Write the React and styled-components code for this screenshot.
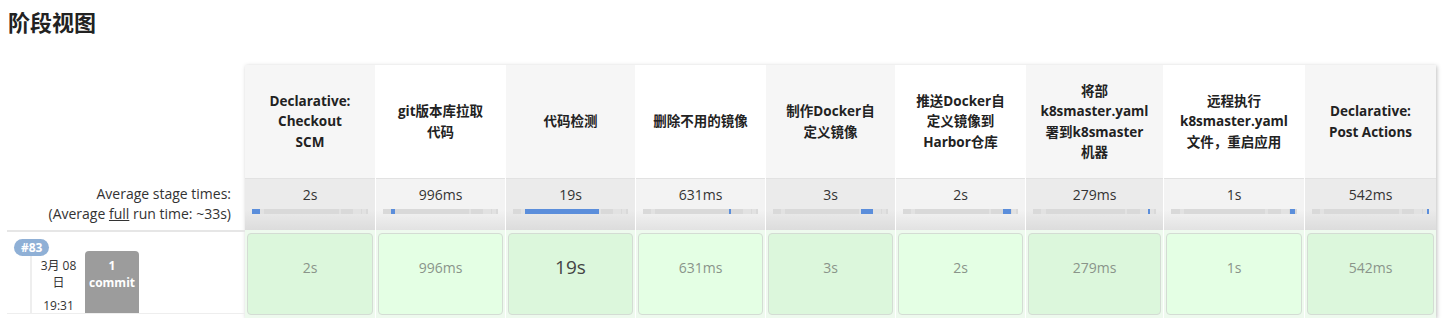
import styled, { createGlobalStyle } from "styled-components";

const GlobalStyle = createGlobalStyle`
  body {
    margin: 0;
    background: #ffffff;
    font-family: "Open Sans", "Noto Sans CJK SC", sans-serif;
    color: #333333;
  }
`;

const stages = [
  { name: ["Declarative:", "Checkout", "SCM"], avg: "2s", ms: 2000, width: 131 },
  { name: ["git版本库拉取", "代码"], avg: "996ms", ms: 996, width: 130 },
  { name: ["代码检测"], avg: "19s", ms: 19000, width: 130, big: true },
  { name: ["删除不用的镜像"], avg: "631ms", ms: 631, width: 130 },
  { name: ["制作Docker自", "定义镜像"], avg: "3s", ms: 3000, width: 130 },
  { name: ["推送Docker自", "定义镜像到", "Harbor仓库"], avg: "2s", ms: 2000, width: 130 },
  { name: ["将部", "k8smaster.yaml", "署到k8smaster", "机器"], avg: "279ms", ms: 279, width: 138 },
  { name: ["远程执行", "k8smaster.yaml", "文件，重启应用"], avg: "1s", ms: 1000, width: 141 },
  { name: ["Declarative:", "Post Actions"], avg: "542ms", ms: 542, width: 131 },
];

const total = stages.reduce((s, st) => s + st.ms, 0);

const Page = styled.div`
  padding: 8px 0 0 7px;
`;

const Title = styled.h2`
  margin: 0 0 0 1px;
  font-size: 22px;
  line-height: 28px;
  font-weight: 700;
  color: #222;
`;

const View = styled.div`
  display: flex;
  margin-top: 29px;
`;

const Side = styled.div`
  width: 238px;
  flex-shrink: 0;
  display: flex;
  flex-direction: column;
`;

const SideHead = styled.div`
  height: 113px;
`;

const SideAvg = styled.div`
  height: 52px;
  display: flex;
  flex-direction: column;
  justify-content: center;
  align-items: flex-end;
  padding-right: 14px;
  font-size: 14px;
  line-height: 20px;
  color: #333;
  text-align: right;
  u {
    text-decoration: underline;
  }
`;

const SideBuild = styled.div`
  position: relative;
  height: 84px;
  box-sizing: border-box;
  border-top: 2px solid #e6e6e6;
  border-bottom: 1px solid #eeeeee;
  display: flex;
  padding-left: 23px;
  padding-top: 19px;
`;

const Badge = styled.span`
  position: absolute;
  left: 7px;
  top: 7px;
  padding: 0 7px;
  height: 17px;
  line-height: 17px;
  border-radius: 9px;
  background: #8fb0d6;
  color: #fff;
  font-size: 12px;
  font-weight: 700;
`;

const DateBox = styled.div`
  width: 55px;
  box-sizing: border-box;
  border-left: 2px solid #eeeeee;
  padding: 6px 6px 0;
  font-size: 12px;
  line-height: 17px;
  text-align: center;
  color: #333;
  div + div {
    margin-top: 6px;
  }
`;

const Commit = styled.div`
  width: 54px;
  background: #9c9c9c;
  border-radius: 4px 4px 0 0;
  color: #fff;
  font-size: 12px;
  font-weight: 700;
  line-height: 17px;
  text-align: center;
  padding-top: 6px;
`;

const Table = styled.div`
  display: flex;
  flex-shrink: 0;
  box-shadow: 1px 1px 4px rgba(0, 0, 0, 0.25);
`;

const Column = styled.div`
  width: ${(p) => p.$w}px;
  flex-shrink: 0;
  box-sizing: border-box;
  display: flex;
  flex-direction: column;
  border-right: 1px solid #ffffff;
  &:last-child {
    border-right: none;
  }
`;

const Head = styled.div`
  height: 113px;
  display: flex;
  flex-direction: column;
  align-items: center;
  justify-content: center;
  background: ${(p) => (p.$odd ? "#f6f6f6" : "#ffffff")};
  font-size: 13.5px;
  font-weight: 700;
  line-height: 20.5px;
  text-align: center;
  color: #222;
  white-space: nowrap;
`;

const Avg = styled.div`
  height: 52px;
  box-sizing: border-box;
  border-top: 1px solid #e2e2e2;
  padding: 6px 7px 0;
  background: ${(p) =>
    p.$odd
      ? "linear-gradient(#ebebeb 60%, #dcdcdc)"
      : "linear-gradient(#f3f3f3 60%, #e2e2e2)"};
  text-align: center;
  font-size: 14px;
  line-height: 20px;
  color: #333;
`;

const Bar = styled.div`
  display: flex;
  height: 5px;
  margin-top: 4px;
  background: #d9d9d9;
`;

const Seg = styled.div`
  height: 100%;
  background: ${(p) => (p.$on ? "#5b8edb" : p.$alt ? "#e2e2e2" : "#d9d9d9")};
`;

const Cell = styled.div`
  height: 88px;
  padding: 3px 2px;
  box-sizing: border-box;
  background: #eefaee;
`;

const CellInner = styled.div`
  height: 100%;
  border: 1px solid #d4dcd4;
  border-radius: 4px;
  box-sizing: border-box;
  background: ${(p) => (p.$odd ? "#dcf7dc" : "#e4ffe4")};
  display: flex;
  align-items: center;
  justify-content: center;
  font-size: ${(p) => (p.$big ? "19px" : "14px")};
  color: ${(p) => (p.$big ? "#444" : "#8a948a")};
  padding-bottom: 14px;
`;

function ProgressBar({ index }) {
  return (
    <Bar>
      {stages.map((st, i) => (
        <Seg
          key={i}
          $on={i === index}
          $alt={i % 2 === 1}
          style={{ width: `${(st.ms / total) * 100}%` }}
        />
      ))}
    </Bar>
  );
}

export default function App() {
  return (
    <Page>
      <GlobalStyle />
      <Title>阶段视图</Title>
      <View>
        <Side>
          <SideHead />
          <SideAvg>
            <div>Average stage times:</div>
            <div>
              (Average <u>full</u> run time: ~33s)
            </div>
          </SideAvg>
          <SideBuild>
            <Badge>#83</Badge>
            <DateBox>
              <div>3月 08 日</div>
              <div>19:31</div>
            </DateBox>
            <Commit>
              1
              <br />
              commit
            </Commit>
          </SideBuild>
        </Side>
        <Table>
          {stages.map((st, i) => (
            <Column key={i} $w={st.width}>
              <Head $odd={i % 2 === 0}>
                {st.name.map((line) => (
                  <div key={line}>{line}</div>
                ))}
              </Head>
              <Avg $odd={i % 2 === 0}>
                {st.avg}
                <ProgressBar index={i} />
              </Avg>
              <Cell>
                <CellInner $odd={i % 2 === 0} $big={st.big}>
                  {st.avg}
                </CellInner>
              </Cell>
            </Column>
          ))}
        </Table>
      </View>
    </Page>
  );
}
